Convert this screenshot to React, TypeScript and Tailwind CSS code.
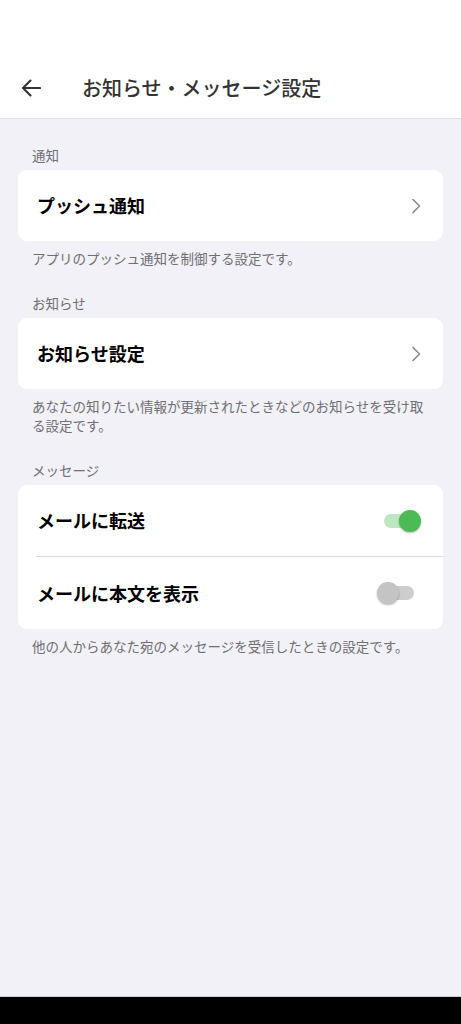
import React, { useState } from 'react'

const font = { fontFamily: '"Noto Sans CJK JP", "Noto Sans", sans-serif' }

function Chevron() {
  return (
    <svg width="10" height="16" viewBox="0 0 10 16" fill="none">
      <path d="M2 1.5 L8.5 8 L2 14.5" stroke="#8a8a8e" strokeWidth="1.6" strokeLinecap="round" strokeLinejoin="round" />
    </svg>
  )
}

function Toggle({ on, onChange }: { on: boolean; onChange: () => void }) {
  return (
    <button onClick={onChange} className="relative w-[44px] h-[24px] shrink-0">
      <span
        className={`absolute left-[7px] right-[7px] top-[5px] h-[14px] rounded-full ${on ? 'bg-[#bde6c1]' : 'bg-[#cdcdcd]'}`}
      />
      <span
        className={`absolute top-px w-[22px] h-[22px] rounded-full shadow-[0_1px_2px_rgba(0,0,0,0.3)] ${on ? 'right-0 bg-[#4cbb55]' : 'left-0 bg-[#c4c4c4]'}`}
      />
    </button>
  )
}

function Label({ children }: { children: React.ReactNode }) {
  return <div className="px-[14px] text-[13.5px] leading-[20px] text-[#6e6e73] mb-[5px]">{children}</div>
}

function Desc({ children }: { children: React.ReactNode }) {
  return <p className="px-[14px] mt-2 text-[13.5px] leading-[19px] text-[#6e6e73]">{children}</p>
}

function LinkRow({ title }: { title: string }) {
  return (
    <div className="bg-white rounded-[9px] h-[71px] pl-[19px] pr-[22px] flex items-center justify-between">
      <span className="text-[18px] font-bold text-black">{title}</span>
      <Chevron />
    </div>
  )
}

export default function App() {
  const [forward, setForward] = useState(true)
  const [showBody, setShowBody] = useState(false)

  return (
    <div className="h-[1024px] w-full flex flex-col" style={font}>
      {/* Header */}
      <div className="h-[119px] bg-white border-b border-[#e2e2e6] pt-[68px] shrink-0">
        <div className="h-[40px] flex items-center">
          <button className="w-[62px] pl-[21px] flex items-center">
            <svg width="20" height="18" viewBox="0 0 20 18" fill="none">
              <path d="M19 9H2.5M9.5 1.5L2 9l7.5 7.5" stroke="#333" strokeWidth="2.1" strokeLinecap="round" strokeLinejoin="round" />
            </svg>
          </button>
          <h1 className="ml-[20px] text-[20px] font-medium text-[#333]">お知らせ・メッセージ設定</h1>
        </div>
      </div>

      {/* Body */}
      <div className="flex-1 bg-[#f2f1f7] px-[18px] pt-[26px]">
        <Label>通知</Label>
        <LinkRow title="プッシュ通知" />
        <Desc>アプリのプッシュ通知を制御する設定です。</Desc>

        <div className="mt-[25px]">
          <Label>お知らせ</Label>
          <LinkRow title="お知らせ設定" />
          <Desc>あなたの知りたい情報が更新されたときなどのお知らせを受け取る設定です。</Desc>
        </div>

        <div className="mt-[25px]">
          <Label>メッセージ</Label>
          <div className="bg-white rounded-[9px]">
            <div className="h-[71px] pl-[19px] pr-[22px] flex items-center justify-between">
              <span className="text-[18px] font-bold text-black">メールに転送</span>
              <Toggle on={forward} onChange={() => setForward(!forward)} />
            </div>
            <div className="ml-[18px] h-px bg-[#dcdcdf]" />
            <div className="h-[72px] pl-[19px] pr-[22px] flex items-center justify-between">
              <span className="text-[18px] font-bold text-black">メールに本文を表示</span>
              <Toggle on={showBody} onChange={() => setShowBody(!showBody)} />
            </div>
          </div>
          <Desc>他の人からあなた宛のメッセージを受信したときの設定です。</Desc>
        </div>
      </div>

      {/* System nav bar */}
      <div className="h-[28px] bg-black shrink-0 border-t border-[#d0d0d4]" />
    </div>
  )
}
